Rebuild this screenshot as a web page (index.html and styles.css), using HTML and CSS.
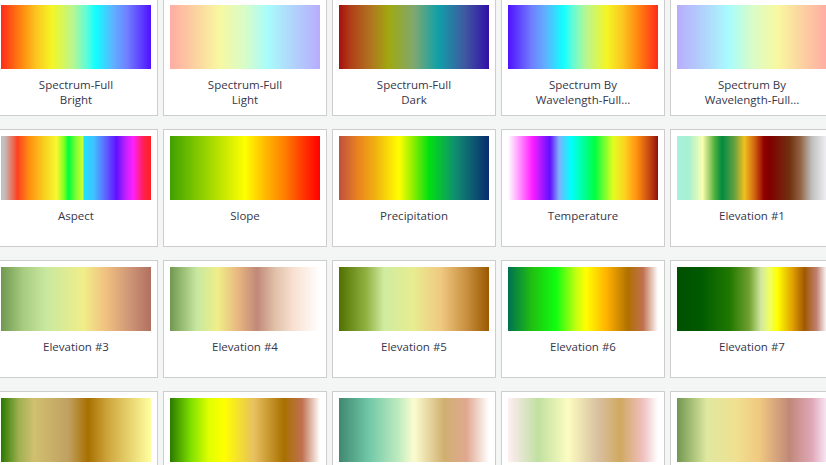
FILE: index.html
```html
<!DOCTYPE html>
<html>
<head>
<meta charset="utf-8">
<link rel="stylesheet" href="styles.css">
</head>
<body>
<div class="gallery">
  <div class="card"><div class="ramp r-spec-bright"></div><div class="label">Spectrum-Full<br>Bright</div></div>
  <div class="card"><div class="ramp r-spec-light"></div><div class="label">Spectrum-Full<br>Light</div></div>
  <div class="card"><div class="ramp r-spec-dark"></div><div class="label">Spectrum-Full<br>Dark</div></div>
  <div class="card"><div class="ramp r-wave"></div><div class="label">Spectrum By<br>Wavelength-Full...</div></div>
  <div class="card"><div class="ramp r-wave-light"></div><div class="label">Spectrum By<br>Wavelength-Full...</div></div>

  <div class="card"><div class="ramp r-aspect"></div><div class="label">Aspect</div></div>
  <div class="card"><div class="ramp r-slope"></div><div class="label">Slope</div></div>
  <div class="card"><div class="ramp r-precip"></div><div class="label">Precipitation</div></div>
  <div class="card"><div class="ramp r-temp"></div><div class="label">Temperature</div></div>
  <div class="card"><div class="ramp r-elev1"></div><div class="label">Elevation #1</div></div>

  <div class="card"><div class="ramp r-elev3"></div><div class="label">Elevation #3</div></div>
  <div class="card"><div class="ramp r-elev4"></div><div class="label">Elevation #4</div></div>
  <div class="card"><div class="ramp r-elev5"></div><div class="label">Elevation #5</div></div>
  <div class="card"><div class="ramp r-elev6"></div><div class="label">Elevation #6</div></div>
  <div class="card"><div class="ramp r-elev7"></div><div class="label">Elevation #7</div></div>

  <div class="card"><div class="ramp r-row4a"></div></div>
  <div class="card"><div class="ramp r-row4b"></div></div>
  <div class="card"><div class="ramp r-row4c"></div></div>
  <div class="card"><div class="ramp r-row4d"></div></div>
  <div class="card"><div class="ramp r-row4e"></div></div>
</div>
</body>
</html>
```

FILE: styles.css
```css
html, body {
  margin: 0;
  padding: 0;
  height: 100%;
  overflow: hidden;
  background: #f4f5f5;
}
body {
  font-family: "Open Sans", "Noto Sans", sans-serif;
}
.gallery {
  display: grid;
  grid-template-columns: repeat(5, 164px);
  grid-auto-rows: 118px;
  column-gap: 5px;
  row-gap: 13px;
  margin: -2px 0 0 -6px;
  width: 900px;
}
.card {
  box-sizing: border-box;
  background: #fff;
  border: 1px solid #cdcdcd;
  padding: 6px;
  display: flex;
  flex-direction: column;
  align-items: center;
}
.ramp {
  width: 150px;
  height: 64px;
  flex: none;
}
.label {
  margin-top: 8px;
  font-size: 11.5px;
  line-height: 15px;
  color: #36364a;
  text-align: center;
  white-space: nowrap;
}

.r-spec-bright { background: linear-gradient(to right, #ff2a1a 0%, #ff8a10 14%, #fcc820 24%, #f5f524 34%, #b8f690 48%, #60fcd8 57%, #10ffff 63%, #60b0ff 75%, #7080ff 84%, #5010ff 100%); }
.r-spec-light { background: linear-gradient(to right, #ffaca4 0%, #fcd0a0 16%, #f8f8a0 33%, #d8fcc8 50%, #a8fcfc 65%, #b0d8fc 80%, #b8acfc 100%); }
.r-spec-dark { background: linear-gradient(to right, #a81010 0%, #b04018 8%, #b07820 22%, #a0a810 33%, #80a870 50%, #10a0a8 66%, #4058a0 84%, #3010a8 100%); }
.r-wave { background: linear-gradient(to right, #5010ff 0%, #7080ff 16%, #60b0ff 25%, #10ffff 37%, #60fcd8 43%, #b8f690 52%, #f5f524 66%, #fcc820 76%, #ff8a10 86%, #ff2a1a 100%); }
.r-wave-light { background: linear-gradient(to right, #b8acfc 0%, #b0d8fc 20%, #a8fcfc 35%, #d8fcc8 50%, #f8f8a0 67%, #fcd0a0 84%, #ffaca4 100%); }

.r-aspect { background: linear-gradient(to right, #c0c0c0 0%, #c0c0c0 2%, #ff4020 11%, #ff9010 19%, #f8d020 29%, #f8f830 37%, #80ff20 42%, #00ff40 45%, #80ff30 50%, #d0ff30 54.5%, #20e0ff 55.5%, #40c0ff 62%, #6060ff 70%, #6010ff 77%, #c020ff 83%, #ff20ff 88%, #ff2050 95%, #ff2020 100%); }
.r-slope { background: linear-gradient(to right, #40a000 0%, #80c800 18%, #c8e800 36%, #ffff00 50%, #ffc000 62%, #ff8000 76%, #ff3000 90%, #ff0000 100%); }
.r-precip { background: linear-gradient(to right, #c05040 0%, #e88020 12%, #f0b010 24%, #ffff00 40%, #a0f000 48%, #00e010 60%, #109070 77%, #0a2a70 100%); }
.r-temp { background: linear-gradient(to right, #ffffff 0%, #ff90ff 8%, #ff20ff 16%, #6010ff 28%, #80b0ff 34%, #00ffff 42%, #00ff40 58%, #e0ff20 70%, #ffd020 78%, #ff9010 86%, #c04010 95%, #901010 100%); }
.r-elev1 { background: linear-gradient(to right, #a8f0e0 0%, #a8f0d0 8%, #f8ffb0 17%, #c0e080 20%, #50b040 25%, #008a40 30%, #60a040 38%, #f0c020 45%, #d06010 52%, #900000 58%, #800000 62%, #703010 75%, #906040 82%, #c0c0c0 90%, #f2f2f6 100%); }

.r-elev3 { background: linear-gradient(to right, #709850 0%, #a8cc80 15%, #c8e8a0 30%, #f0ee88 55%, #f0c080 70%, #d09878 85%, #b07060 100%); }
.r-elev4 { background: linear-gradient(to right, #709850 0%, #c8e8a0 18%, #f0ee88 32%, #e8b880 45%, #c08878 58%, #e0c0a8 70%, #f8e0d0 82%, #ffffff 100%); }
.r-elev5 { background: linear-gradient(to right, #507000 0%, #90b040 18%, #d0eca0 30%, #e8ec90 50%, #f0c880 68%, #c89040 85%, #9a5800 100%); }
.r-elev6 { background: linear-gradient(to right, #007050 0%, #20c010 16%, #10ff10 32%, #c0ff10 45%, #ffff00 52%, #ffb000 66%, #b07000 80%, #c07050 90%, #ffffff 100%); }
.r-elev7 { background: linear-gradient(to right, #005000 0%, #005a00 16%, #207800 35%, #70a030 48%, #d0e8a0 56%, #f0ff60 62%, #ffff00 67%, #e0a000 77%, #a05800 85%, #c08070 93%, #ffffff 100%); }

.r-row4a { background: linear-gradient(to right, #2a7a00 0%, #a0b050 12%, #d0c070 22%, #c0a060 45%, #a87000 58%, #d0a840 72%, #ffffa0 100%); }
.r-row4b { background: linear-gradient(to right, #2a7a00 0%, #80e000 14%, #e0ff00 26%, #ffff00 36%, #e8c060 56%, #a87000 76%, #c07050 88%, #ffffff 100%); }
.r-row4c { background: linear-gradient(to right, #408870 0%, #70c8a8 20%, #c0ecc0 40%, #fcfcd0 50%, #d0b070 70%, #e0a890 85%, #ffffff 100%); }
.r-row4d { background: linear-gradient(to right, #fff0f0 0%, #f0e8e0 5%, #c0e0a0 20%, #fcfcc0 40%, #d8c0a0 60%, #d0a860 75%, #f0c0c0 90%, #ffffff 100%); }
.r-row4e { background: linear-gradient(to right, #709850 0%, #e0e8a0 20%, #f0e090 40%, #f0c880 55%, #c08878 75%, #e0a8b8 90%, #f8e8f8 100%); }
```
